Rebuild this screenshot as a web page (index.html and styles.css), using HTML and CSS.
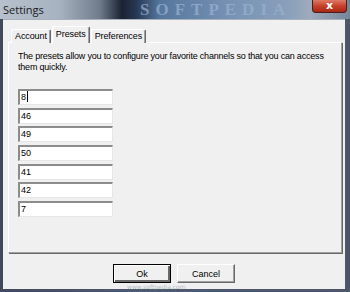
FILE: index.html
```html
<!DOCTYPE html>
<html lang="en">

<head>
  <meta charset="UTF-8" />
  <meta name="viewport" content="width=device-width, initial-scale=1.0" />
  <title>Settings</title>
  <link rel="stylesheet" href="styles.css">
</head>

<body>
  <div class="window">
    <!-- 标题栏 -->
    <div class="titlebar">
      <span class="title">Settings</span>
      <span class="mark">SOFTPEDIA</span>
      <div class="close">x</div>
    </div>
    <div class="client">
      <ul class="tabs">
        <li>Account</li>
        <li class="active">Presets</li>
        <li>Preferences</li>
      </ul>
      <div class="panel">
        <p class="intro">The presets allow you to configure your favorite channels so that you can access<br />them quickly.</p>
        <div class="fields">
          <div class="field">8<span class="caret"></span></div>
          <div class="field">46</div>
          <div class="field">49</div>
          <div class="field">50</div>
          <div class="field">41</div>
          <div class="field">42</div>
          <div class="field">7</div>
        </div>
      </div>
      <div class="buttons">
        <button class="default">Ok</button>
        <button>Cancel</button>
      </div>
      <span class="mark-url">www.softpedia.com</span>
    </div>
  </div>
</body>

</html>
```

FILE: styles.css
```css
* {
  margin: 0;
  padding: 0;
  box-sizing: border-box;
}

ul {
  list-style: none;
}

body {
  width: 350px;
  height: 292px;
  overflow: hidden;
  font-family: "Liberation Sans", Arial, sans-serif;
  font-size: 9px;
  color: #000;
}

.window {
  width: 350px;
  height: 292px;
  display: flex;
  flex-direction: column;
  background: linear-gradient(90deg, #3f4a5c, #4f5b6e 40%, #4b5769);
}

.titlebar {
  height: 19px;
  flex: none;
  display: flex;
  align-items: flex-start;
  position: relative;
  background: linear-gradient(90deg, #b7c1cd 0, #a7b2c0 60px, #6f7a8b 100px, #1b2333 122px, #253551 135px, #56769d 160px, #7692b4 230px, #8aa0bb 290px, #9eabbc 310px, #76859a 350px);
}

.titlebar .title {
  padding: 2px 0 0 3px;
  font: 11px "Open Sans", "Liberation Sans", sans-serif;
  color: #1a1a1a;
}

.titlebar .mark {
  position: absolute;
  left: 140px;
  top: 0;
  font: bold 17px/19px "Liberation Serif", serif;
  letter-spacing: 6px;
  color: #9ab2d0;
  opacity: 0.7;
}

.titlebar .close {
  flex: 0 0 35px;
  min-width: 35px;
  margin-left: auto;
  margin-right: 3px;
  height: 13px;
  border: 1px solid #4a1f1a;
  border-top: none;
  border-radius: 0 0 4px 4px;
  background: #c13b27 linear-gradient(#dd7a66, #c8402a 50%, #a82815);
  color: #fff;
  font: bold 11px "DejaVu Sans", sans-serif;
  line-height: 11px;
  text-align: center;
  position: relative;
  z-index: 1;
}

.client {
  flex: 1;
  margin: 0 5px 3px 3px;
  background: #f0f0f0;
  border-top: 1px solid #a8b0bb;
  display: flex;
  flex-direction: column;
  position: relative;
}

.tabs {
  display: flex;
  align-items: flex-end;
  margin: 6px 0 -1px 8px;
  position: relative;
  z-index: 1;
  letter-spacing: -0.1px;
}

.tabs li {
  height: 14px;
  padding: 0 3px;
  line-height: 13px;
  border: 1px solid #fff;
  border-right-color: #696969;
  border-bottom: none;
  border-radius: 2px 2px 0 0;
  box-shadow: inset -1px 0 #a0a0a0;
  background: #f0f0f0;
}

.tabs li.active {
  height: 17px;
  line-height: 14px;
}

.tabs li + li {
  margin-left: 1px;
}

.panel {
  height: 211px;
  flex: none;
  margin: 0 3px 0 5px;
  padding: 8px 9px;
  border: 1px solid #fff;
  border-right-color: #a0a0a0;
  border-bottom-color: #a0a0a0;
  box-shadow: 1px 1px #696969;
  background: #f0f0f0;
}

.intro {
  line-height: 11px;
  white-space: nowrap;
  letter-spacing: -0.2px;
}

.fields {
  margin-top: 16px;
  display: flex;
  flex-direction: column;
  gap: 2.7px;
}

.field {
  width: 95px;
  height: 16px;
  padding-left: 1px;
  border: 2px solid #8c8c8c;
  border-right: 1px solid #e6e6e6;
  border-bottom: 1px solid #e6e6e6;
  background: #fff;
  line-height: 13px;
}

.caret {
  display: inline-block;
  width: 1px;
  height: 11px;
  margin-left: 1px;
  vertical-align: -2px;
  background: #000;
}

.buttons {
  margin-top: 11px;
  display: flex;
  justify-content: center;
  gap: 6px;
}

.buttons button {
  width: 58px;
  height: 19px;
  border: 1px solid #fff;
  border-right-color: #696969;
  border-bottom-color: #696969;
  box-shadow: inset -1px -1px #a0a0a0;
  background: #f0f0f0;
  font: 9px "Liberation Sans", Arial, sans-serif;
  color: #000;
}

.buttons button.default {
  border: 1px solid #000;
  box-shadow: inset 1px 1px #fff, inset -2px -2px #696969;
}

.mark-url {
  position: absolute;
  left: 124px;
  bottom: -1px;
  font: 6px "DejaVu Sans", sans-serif;
  color: rgba(160, 170, 185, 0.8);
}
```
